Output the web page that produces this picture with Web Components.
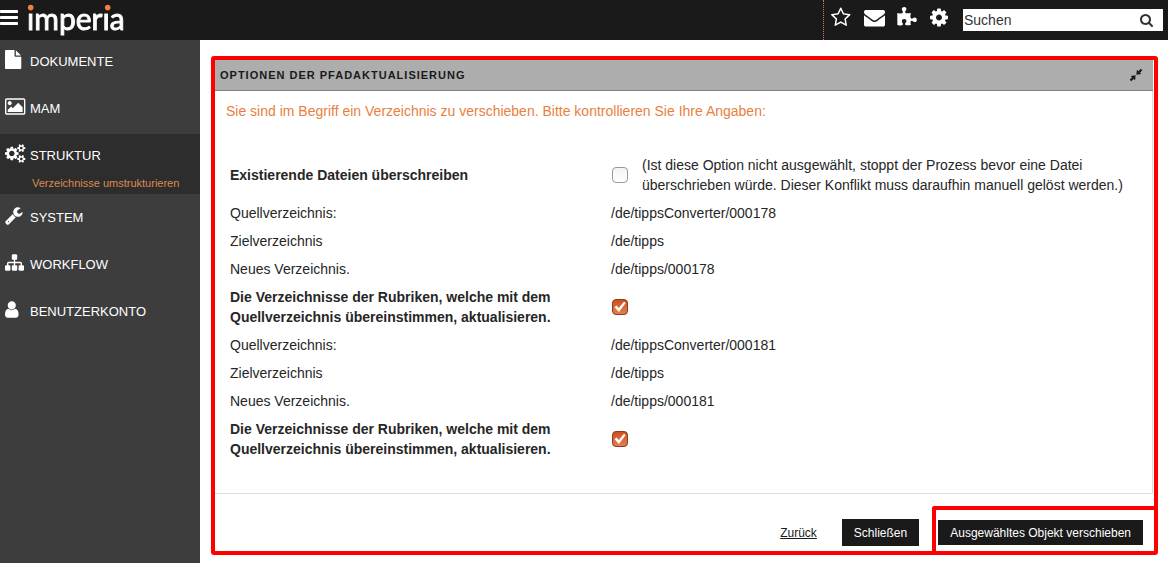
<!DOCTYPE html>
<html lang="de">
<head>
<meta charset="utf-8">
<meta name="viewport" content="width=device-width, initial-scale=1">
<title>imperia – Optionen der Pfadaktualisierung</title>
<style>
html, body { margin: 0; min-height: 100%; }
body { font-family: "Liberation Sans", Arial, sans-serif; font-size: 14px; line-height: 20px; color: #1a1a1a; background: #fff; }
</style>
</head>
<body>
<imperia-app>
  <app-header slot="header"></app-header>
  <side-nav slot="nav">
    <nav-item icon="file">DOKUMENTE</nav-item>
    <nav-item icon="picture">MAM</nav-item>
    <nav-item icon="cogs" active>STRUKTUR<a slot="sub" href="#verzeichnisse">Verzeichnisse umstrukturieren</a></nav-item>
    <nav-item icon="wrench">SYSTEM</nav-item>
    <nav-item icon="sitemap">WORKFLOW</nav-item>
    <nav-item icon="user">BENUTZERKONTO</nav-item>
  </side-nav>
  <option-panel>
    <span slot="title">OPTIONEN DER PFADAKTUALISIERUNG</span>
    <span slot="intro">Sie sind im Begriff ein Verzeichnis zu verschieben. Bitte kontrollieren Sie Ihre Angaben:</span>
    <path-options></path-options>
    <panel-actions slot="actions"></panel-actions>
  </option-panel>
</imperia-app>

<script>
// Each icon: [x origin, width, path] on a grid 1792 units high.
const SMALL_COG = 'v140q0 16-149 31-12 27-30 52 51 113 51 138 0 4-4 7-122 71-124 71-8 0-46-47t-52-68q-20 2-30 2t-30-2q-14 21-52 68t-46 47q-2 0-124-71-4-3-4-7 0-25 51-138-18-25-30-52-149-15-149-31v-140q0-16 149-31 13-29 30-52-51-113-51-138 0-4 4-7 4-2 35-20t59-34 30-16q8 0 46 46.5t52 67.5q20-2 30-2t30 2q51-71 92-112l6-2q4 0 124 70 4 3 4 7 0 25-51 138 17 23 30 52 149 15 149 31z';
const ICONS = {
  bars: [128, 1536, 'M1664 1344v128q0 26-19 45t-45 19h-1408q-26 0-45-19t-19-45v-128q0-26 19-45t45-19h1408q26 0 45 19t19 45zm0-512v128q0 26-19 45t-45 19h-1408q-26 0-45-19t-19-45v-128q0-26 19-45t45-19h1408q26 0 45 19t19 45zm0-512v128q0 26-19 45t-45 19h-1408q-26 0-45-19t-19-45v-128q0-26 19-45t45-19h1408q26 0 45 19t19 45z'],
  file: [128, 1536, 'M1152 512v-472q22 14 36 28l408 408q14 14 28 36h-472zm-128 32q0 40 28 68t68 28h544v1056q0 40-28 68t-68 28h-1344q-40 0-68-28t-28-68v-1600q0-40 28-68t68-28h800v544z'],
  picture: [-64, 1920, 'M576 576q0 80-56 136t-136 56-136-56-56-136 56-136 136-56 136 56 56 136zm1024 384v448h-1408v-192l320-320 160 160 512-512zm96-704h-1600q-13 0-22.5 9.5t-9.5 22.5v1216q0 13 9.5 22.5t22.5 9.5h1600q13 0 22.5-9.5t9.5-22.5v-1216q0-13-9.5-22.5t-22.5-9.5zm160 32v1216q0 66-47 113t-113 47h-1600q-66 0-113-47t-47-113v-1216q0-66 47-113t113-47h1600q66 0 113 47t47 113z'],
  cogs: [-64, 1920, 'M832 896q0-106-75-181t-181-75-181 75-75 181 75 181 181 75 181-75 75-181zm768 512q0-52-38-90t-90-38-90 38-38 90q0 53 37.5 90.5t90.5 37.5 90.5-37.5 37.5-90.5zm0-1024q0-52-38-90t-90-38-90 38-38 90q0 53 37.5 90.5t90.5 37.5 90.5-37.5 37.5-90.5zm-384 421v185q0 10-7 19.5t-16 10.5l-155 24q-11 35-32 76 34 48 90 115 7 11 7 20 0 12-7 19-23 30-82.5 89.5t-78.5 59.5q-11 0-21-7l-115-90q-37 19-77 31-11 108-23 155-7 24-30 24h-186q-11 0-20-7.5t-10-17.5l-23-153q-34-10-75-31l-118 89q-7 7-20 7-11 0-21-8-144-133-144-160 0-9 7-19 10-14 41-53t47-61q-23-44-35-82l-152-24q-10-1-17-9.5t-7-19.5v-185q0-10 7-19.5t16-10.5l155-24q11-35 32-76-34-48-90-115-7-11-7-20 0-12 7-20 22-30 82-89t79-59q11 0 21 7l115 90q34-18 77-32 11-108 23-154 7-24 30-24h186q11 0 20 7.5t10 17.5l23 153q34 10 75 31l118-89q8-7 20-7 11 0 21 8 144 133 144 160 0 8-7 19-12 16-42 54t-45 60q23 48 34 82l152 23q10 2 17 10.5t7 19.5zm640 533' + SMALL_COG + 'M1856 314' + SMALL_COG],
  wrench: [64, 1664, 'M448 1472q0-26-19-45t-45-19-45 19-19 45 19 45 45 19 45-19 19-45zm644-420l-682 682q-37 37-90 37-52 0-91-37l-106-108q-38-36-38-90 0-53 38-91l681-681q39 98 114.5 173.5t173.5 114.5zm634-435q0 39-23 106-47 134-164.5 217.5t-258.5 83.5q-185 0-316.5-131.5t-131.5-316.5 131.5-316.5 316.5-131.5q58 0 121.5 16.5t107.5 46.5q16 11 16 28t-16 28l-293 169v224l193 107q5-3 79-48.5t135.5-81 70.5-35.5q15 0 23.5 10t8.5 25z'],
  sitemap: [0, 1792, 'M1792 1248v320q0 40-28 68t-68 28h-320q-40 0-68-28t-28-68v-320q0-40 28-68t68-28h96v-192h-512v192h96q40 0 68 28t28 68v320q0 40-28 68t-68 28h-320q-40 0-68-28t-28-68v-320q0-40 28-68t68-28h96v-192h-512v192h96q40 0 68 28t28 68v320q0 40-28 68t-68 28h-320q-40 0-68-28t-28-68v-320q0-40 28-68t68-28h96v-192q0-52 38-90t90-38h512v-192h-96q-40 0-68-28t-28-68v-320q0-40 28-68t68-28h320q40 0 68 28t28 68v320q0 40-28 68t-68 28h-96v192h512q52 0 90 38t38 90v192h96q40 0 68 28t28 68z'],
  user: [256, 1280, 'M1536 1399q0 109-62.5 187t-150.5 78h-854q-88 0-150.5-78t-62.5-187q0-85 8.5-160.5t31.5-152 58.5-131 94-89 134.5-34.5q131 128 313 128t313-128q76 0 134.5 34.5t94 89 58.5 131 31.5 152 8.5 160.5zm-256-887q0 159-112.5 271.5t-271.5 112.5-271.5-112.5-112.5-271.5 112.5-271.5 271.5-112.5 271.5 112.5 112.5 271.5z'],
  star: [64, 1664, 'M1201 1004l306-297-422-62-189-382-189 382-422 62 306 297-73 421 378-199 377 199zm527-357q0 22-26 48l-363 354 86 500q1 7 1 20 0 50-41 50-19 0-40-12l-449-236-449 236q-22 12-40 12-21 0-31.5-14.5t-10.5-35.5q0-6 2-20l86-500-364-354q-25-27-25-48 0-37 56-46l502-73 225-455q19-41 49-41t49 41l225 455 502 73q56 9 56 46z'],
  envelope: [0, 1792, 'M1792 710v794q0 66-47 113t-113 47h-1472q-66 0-113-47t-47-113v-794q44 49 101 87 362 246 497 345 57 42 92.5 65.5t94.5 48 110 24.5h2q51 0 110-24.5t94.5-48 92.5-65.5q170-123 498-345 57-39 100-87zm0-294q0 79-49 151t-122 123q-376 261-468 325-10 7-42.5 31t-54 38.5-52 32.5-57.5 27-50 9h-2q-23 0-50-9t-57.5-27-52-32.5-54-38.5-42.5-31q-91-64-262-182.5t-205-142.5q-62-42-117-115.5t-55-136.5q0-78 41.5-130t118.5-52h1472q65 0 112.5 47t47.5 113z'],
  puzzle: [64, 1664, 'M1755 1099q0 81-44.5 135t-123.5 54q-41 0-77.5-17.5t-59-38-56.5-38-71-17.5q-110 0-110 124 0 39 16 115t15 115v5q-22 0-33 1-34 3-97.5 11.5t-115.5 13.5-98 5q-61 0-103-26.5t-42-83.5q0-37 17.5-71t38-56.5 38-59 17.5-77.5q0-79-54-123.5t-135-44.5q-84 0-143 45.5t-59 127.5q0 43 15 83t33.5 64.5 33.5 53 15 50.5q0 45-46 89-37 35-117 35-95 0-245-24-9-2-27.5-4t-27.5-4l-13-2q-1 0-3-1-2 0-2-1v-1024q2 1 17.5 3.5t34 5 21.5 3.5q150 24 245 24 80 0 117-35 46-44 46-89 0-22-15-50.5t-33.5-53-33.5-64.5-15-83q0-82 59-127.5t144-45.5q80 0 134 44.5t54 123.5q0 41-17.5 77.5t-38 59-38 56.5-17.5 71q0 57 42 83.5t103 26.5q64 0 180-15t163-17v2q-1 2-3.5 17.5t-5 34-3.5 21.5q-24 150-24 245 0 80 35 117 44 46 89 46 22 0 50.5-15t53-33.5 64.5-33.5 83-15q82 0 127.5 59t45.5 143z'],
  cog: [128, 1536, 'M1152 896q0-106-75-181t-181-75-181 75-75 181 75 181 181 75 181-75 75-181zm512-109v222q0 12-8 23t-20 13l-185 28q-19 54-39 91 35 50 107 138 10 12 10 25t-9 23q-27 37-99 108t-94 71q-12 0-26-9l-138-108q-44 23-91 38-16 136-29 186-7 28-36 28h-222q-14 0-24.5-8.5t-11.5-21.5l-28-184q-49-16-90-37l-141 107q-10 9-25 9-14 0-25-11-126-114-165-168-7-10-7-23 0-12 8-23 15-21 51-66.5t54-70.5q-27-50-41-99l-183-27q-13-2-21-12.5t-8-23.5v-222q0-12 8-23t19-13l186-28q14-46 39-92-40-57-107-138-10-12-10-24 0-10 9-23 26-36 98.5-107.5t94.5-71.5q13 0 26 10l138 107q44-23 91-38 16-136 29-186 7-28 36-28h222q14 0 24.5 8.5t11.5 21.5l28 184q49 16 90 37l142-107q9-9 24-9 13 0 25 10 129 119 165 170 7 8 7 22 0 12-8 23-15 21-51 66.5t-54 70.5q26 50 41 98l183 28q13 2 21 12.5t8 23.5z'],
  search: [64, 1664, 'M1216 832q0-185-131.5-316.5t-316.5-131.5-316.5 131.5-131.5 316.5 131.5 316.5 316.5 131.5 316.5-131.5 131.5-316.5zm512 832q0 52-38 90t-90 38q-54 0-90-38l-343-342q-179 124-399 124-143 0-273.5-55.5t-225-150-150-225-55.5-273.5 55.5-273.5 150-225 225-150 273.5-55.5 273.5 55.5 225 150 150 225 55.5 273.5q0 220-124 399l343 343q37 37 37 90z'],
  compress: [128, 1536, 'M850 942l-70 640-190-190-300 300-200-200 300-300-180-180zM942 850l70-640 190 190 300-300 200 200-300 300 180 180z']
};

function define(name, html, setup) {
  const template = document.createElement('template');
  template.innerHTML = html;
  customElements.define(name, class extends HTMLElement {
    constructor() {
      super();
      this.attachShadow({ mode: 'open' }).append(template.content.cloneNode(true));
    }
    connectedCallback() { if (setup) setup(this, this.shadowRoot); }
  });
}

define('ui-icon', `
<style>
:host { display: block; flex: none; --size: 19px; }
svg { display: block; height: var(--size); overflow: visible; fill: currentColor; }
</style>
<svg aria-hidden="true"><path></path></svg>`, (host, root) => {
  const [x, width, d] = ICONS[host.getAttribute('name')];
  const svg = root.querySelector('svg');
  svg.setAttribute('viewBox', x + ' 0 ' + width + ' 1792');
  svg.style.aspectRatio = width + ' / 1792';
  root.querySelector('path').setAttribute('d', d);
});

define('imperia-app', `
<style>
:host { display: grid; grid-template: auto 1fr / 200px minmax(0, 1fr); min-height: 100vh; }
header { grid-column: 1 / -1; }
main { padding: 16px 10px 8px 11px; }
nav { background: #3d3d3d; }
</style>
<header><slot name="header"></slot></header>
<nav aria-label="Hauptmenü"><slot name="nav"></slot></nav>
<main><slot></slot></main>`);

// The word mark: the upper part of the letters is left dark, and the two orange dots lie over it.
define('imperia-logo', `
<style>
:host { display: block; position: relative; }
a { display: block; font: 30px/36px Lato, sans-serif; text-decoration: none; color: transparent; -webkit-text-stroke: 1px transparent;
  background: linear-gradient(#1a1a1a 12px, #fff 12px); -webkit-background-clip: text; background-clip: text; }
svg { position: absolute; left: 0; top: 0; width: 100%; height: 12px; pointer-events: none; fill: #f47c3c; }
</style>
<a href="#start">imperia</a>
<svg aria-hidden="true"><circle cx="3.7" cy="7.6" r="2.8"></circle><circle cx="80.7" cy="7.6" r="2.8"></circle></svg>`);

define('search-box', `
<style>
:host { display: block; }
form { display: flex; align-items: center; width: 200px; height: 22px; background: #fff; }
input { flex: 1; min-width: 0; height: 22px; box-sizing: border-box; margin: 0; padding: 0 1px; border: 0; outline: 0; background: none; font: 14px/20px "Liberation Sans", Arial, sans-serif; color: #333; }
input::placeholder { color: #333; opacity: 1; }
button { padding: 0 10px; border: 0; background: none; color: #333; cursor: pointer; }
ui-icon { --size: 14px; }
</style>
<form role="search"><input type="text" aria-label="Suchen" placeholder="Suchen"><button type="button" aria-label="Suche starten"><ui-icon name="search"></ui-icon></button></form>`);

define('app-header', `
<style>
:host { display: flex; height: 40px; background: #1a1a1a; color: #fff; }
button { display: block; padding: 0; border: 0; background: none; color: inherit; cursor: pointer; }
ui-icon { --size: 21px; }
.menu { width: 27px; padding: 7px 0 12px; }
.tools { display: grid; grid-template-columns: repeat(4, 33px) auto; align-items: start; margin-left: auto; padding: 7px 5px 0 7px; border-left: 1px dotted #d07a48; }
search-box { padding-top: 2px; }
</style>
<button class="menu" aria-label="Menü"><ui-icon name="bars"></ui-icon></button>
<imperia-logo></imperia-logo>
<div class="tools">
  <button aria-label="Favoriten"><ui-icon name="star"></ui-icon></button>
  <button aria-label="Nachrichten"><ui-icon name="envelope"></ui-icon></button>
  <button aria-label="Erweiterungen"><ui-icon name="puzzle"></ui-icon></button>
  <button aria-label="Einstellungen"><ui-icon name="cog"></ui-icon></button>
  <search-box></search-box>
</div>`);

define('side-nav', `
<style>:host { display: block; }</style>
<slot></slot>`);

define('nav-item', `
<style>
:host { display: block; font-size: 13px; color: #fff; }
:host([active]) { background: #2d2d2d; margin-bottom: 2px; }
.item { display: grid; grid-template-columns: 25px 1fr; align-items: start; height: 37px; padding: 10px 0 0 5px; color: inherit; text-decoration: none; }
.label { grid-column: 2; padding-top: 2px; line-height: 20px; }
ui-icon { grid-area: 1 / 1; }
::slotted(a) { display: block; padding: 0 0 3px 32px; margin-top: -6px; font-size: 11px; line-height: 16px; color: #dd8a50; text-decoration: none; }
</style>
<a class="item" href="#"><span class="label"><slot></slot></span></a>
<slot name="sub"></slot>`, (host, root) => {
  const icon = document.createElement('ui-icon');
  icon.setAttribute('name', host.getAttribute('icon'));
  root.querySelector('.item').prepend(icon);
});

define('option-panel', `
<style>
:host { display: block; border: 4px solid #f00; border-radius: 3px; }
section { margin-right: 1px; border: solid #ddd; border-width: 0 1px 1px 0; }
header { display: flex; justify-content: space-between; align-items: center; height: 30px; margin-right: -1px; padding: 0 11px 0 5px; background: #adadad; border-bottom: 1px solid #808080; }
h1 { margin: 0; font-size: 11px; line-height: 20px; letter-spacing: 1px; color: #1a1a1a; }
button { padding: 0; border: 0; background: none; color: #1a1a1a; cursor: pointer; }
button ui-icon { --size: 14px; }
.body { padding: 10px 10px 30px 11px; }
p { margin: 0 0 30px; color: #e87f3d; }
</style>
<section>
  <header><h1><slot name="title"></slot></h1><button aria-label="Einklappen"><ui-icon name="compress"></ui-icon></button></header>
  <div class="body"><p><slot name="intro"></slot></p><slot></slot></div>
</section>
<slot name="actions"></slot>`);

define('check-box', `
<style>
:host { display: block; flex: none; }
input { appearance: none; display: block; box-sizing: border-box; width: 16px; height: 16px; margin: 0 1px; border: 1px solid #999; border-radius: 4px; background: linear-gradient(#f4f4f4, #fff); cursor: pointer; }
.box { display: grid; }
input, svg { grid-area: 1 / 1; }
svg { display: none; width: 16px; height: 16px; margin: 0 1px; pointer-events: none; }
input:checked { border-color: #8f3d1c; background: linear-gradient(#d0501f, #e08055); }
input:checked + svg { display: block; }
</style>
<span class="box"><input type="checkbox"><svg viewBox="0 0 16 16" aria-hidden="true"><path d="M2.5 8.2l2-1.6 2.3 2.5L12 2.8l1.7 1.3-6.8 8.8z" fill="#fff"></path></svg></span>`, (host, root) => {
  const input = root.querySelector('input');
  input.checked = host.hasAttribute('checked');
  input.setAttribute('aria-label', host.getAttribute('label'));
});

define('path-options', `
<style>
:host { display: block; color: #262626; }
table { width: 100%; table-layout: fixed; border-collapse: collapse; }
th, td { padding: 4px; text-align: left; vertical-align: middle; font-weight: normal; line-height: 20px; }
th { width: 373px; }
.strong { font-weight: bold; }
.strong span { display: block; max-width: 340px; }
.note { display: flex; align-items: center; gap: 13px; }
</style>
<table>
  <tbody>
    <tr><th scope="row" class="strong">Existierende Dateien überschreiben</th><td><div class="note"><check-box label="Existierende Dateien überschreiben"></check-box><span>(Ist diese Option nicht ausgewählt, stoppt der Prozess bevor eine Datei überschrieben würde. Dieser Konflikt muss daraufhin manuell gelöst werden.)</span></div></td></tr>
    <tr><th scope="row">Quellverzeichnis:</th><td>/de/tippsConverter/000178</td></tr>
    <tr><th scope="row">Zielverzeichnis</th><td>/de/tipps</td></tr>
    <tr><th scope="row">Neues Verzeichnis.</th><td>/de/tipps/000178</td></tr>
    <tr><th scope="row" class="strong"><span>Die Verzeichnisse der Rubriken, welche mit dem Quellverzeichnis übereinstimmen, aktualisieren.</span></th><td><check-box checked label="Verzeichnisse der Rubriken aktualisieren (000178)"></check-box></td></tr>
    <tr><th scope="row">Quellverzeichnis:</th><td>/de/tippsConverter/000181</td></tr>
    <tr><th scope="row">Zielverzeichnis</th><td>/de/tipps</td></tr>
    <tr><th scope="row">Neues Verzeichnis.</th><td>/de/tipps/000181</td></tr>
    <tr><th scope="row" class="strong"><span>Die Verzeichnisse der Rubriken, welche mit dem Quellverzeichnis übereinstimmen, aktualisieren.</span></th><td><check-box checked label="Verzeichnisse der Rubriken aktualisieren (000181)"></check-box></td></tr>
  </tbody>
</table>`);

define('panel-actions', `
<style>
:host { display: flex; justify-content: flex-end; align-items: center; margin-top: 12px; font-size: 12px; }
a { margin: 8px 25px 0 0; color: #1a1a1a; }
button { display: block; margin: 0; padding: 1px 12px 0; border: 0; background: #1a1a1a; color: #fff; font: 12px/24px "Liberation Sans", Arial, sans-serif; cursor: pointer; }
.close { margin: 8px 13px 0 0; padding: 2px 12px 1px; }
.marked { padding: 10px 11px 6px 2px; border: solid #f00; border-width: 4px 0 0 4px; border-radius: 3px 0 0 0; }
</style>
<a href="#zurueck">Zurück</a>
<button class="close" type="button">Schließen</button>
<div class="marked"><button type="button">Ausgewähltes Objekt verschieben</button></div>`);
</script>
</body>
</html>
